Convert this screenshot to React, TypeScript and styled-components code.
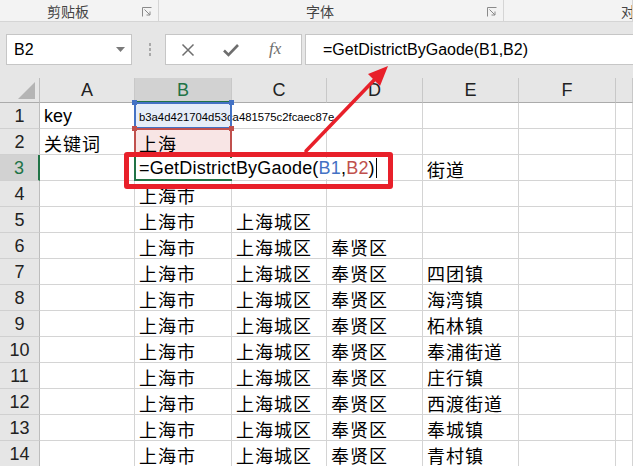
import React from "react";
import styled, { createGlobalStyle, css } from "styled-components";

const Global = createGlobalStyle`
  html, body { margin: 0; padding: 0; background: #ffffff; }
  body { font-family: "Liberation Sans", "Noto Sans CJK SC", sans-serif; }
`;

const Root = styled.div`
  position: relative;
  width: 633px;
  height: 466px;
  overflow: hidden;
  background: #ffffff;
`;

/* ---------- Ribbon ---------- */
const Ribbon = styled.div`
  display: flex;
  height: 21px;
  background: #f3f3f3;
  border-bottom: 1px solid #d5d5d5;
`;

const Group = styled.div<{ $w?: number; $pad: number }>`
  position: relative;
  display: flex;
  align-items: center;
  ${(p) => (p.$w ? `width: ${p.$w}px; flex: none;` : "flex: 1;")}
  padding-left: ${(p) => p.$pad}px;
  box-sizing: border-box;
  border-right: 1px solid #d5d5d5;
  font-family: "Noto Sans CJK SC", sans-serif;
  font-size: 14px;
  color: #444444;
  white-space: nowrap;
  overflow: hidden;
`;

const Launcher = styled.svg`
  position: absolute;
  right: 6px;
  top: 7px;
`;

const LauncherIcon = () => (
  <Launcher width="10" height="10" viewBox="0 0 10 10">
    <path d="M0.5 9.5 V0.5 H9.5" fill="none" stroke="#8a8a8a" strokeWidth="1" />
    <path d="M2.5 2.5 L8 8 M8 4.5 V8 H4.5" fill="none" stroke="#8a8a8a" strokeWidth="1" />
  </Launcher>
);

/* ---------- Formula bar ---------- */
const FormulaArea = styled.div`
  display: flex;
  align-items: flex-start;
  height: 56px;
  background: #e6e6e6;
  padding-top: 12px;
  box-sizing: border-box;
`;

const NameBox = styled.div`
  display: flex;
  align-items: center;
  justify-content: space-between;
  margin-left: 6px;
  width: 126px;
  height: 31px;
  box-sizing: border-box;
  background: #ffffff;
  border: 1px solid #c6c6c6;
  padding: 0 6px 0 7px;
  font-size: 16px;
  color: #000;
`;

const Dots = styled.div`
  display: flex;
  flex-direction: column;
  gap: 2px;
  margin: 9px 0 0 17px;
  width: 20px;
  span {
    width: 2px;
    height: 3px;
    background: #a9a9a9;
  }
`;

const FxBox = styled.div`
  display: flex;
  align-items: center;
  width: 137px;
  height: 31px;
  box-sizing: border-box;
  margin-left: -4px;
  background: #ffffff;
  border: 1px solid #c6c6c6;
  padding-left: 15px;
  gap: 28px;
`;

const FxText = styled.span`
  font-family: "Liberation Serif", serif;
  font-style: italic;
  font-size: 17px;
  color: #6e6e6e;
  margin: -2px 0 0 2px;
`;

const FormulaInput = styled.div`
  flex: 1;
  height: 31px;
  margin-left: 3px;
  box-sizing: border-box;
  background: #ffffff;
  border: 1px solid #c6c6c6;
  border-right: none;
  padding-left: 17px;
  display: flex;
  align-items: center;
  font-size: 16px;
  color: #000;
  white-space: nowrap;
`;

/* ---------- Sheet ---------- */
const Sheet = styled.div`
  position: relative;
  display: grid;
  grid-template-columns: 40px 95px 97px 95px 96px 96px 97px 1fr;
  grid-template-rows: 25px repeat(14, 26px);
`;

const Corner = styled.div`
  background: #e6e6e6;
  border-right: 1px solid #bdbdbd;
  border-bottom: 1px solid #ababab;
  box-sizing: border-box;
  display: flex;
  align-items: flex-end;
  justify-content: flex-end;
  padding: 0 4px 3px 0;
`;

const ColHead = styled.div<{ $sel?: boolean }>`
  background: ${(p) => (p.$sel ? "#d2d2d2" : "#e6e6e6")};
  color: ${(p) => (p.$sel ? "#217346" : "#222222")};
  border-right: 1px solid #c8c8c8;
  border-bottom: ${(p) => (p.$sel ? "2px solid #217346" : "1px solid #ababab")};
  box-sizing: border-box;
  display: flex;
  align-items: center;
  justify-content: center;
  font-size: 18px;
  padding-top: ${(p) => (p.$sel ? "2px" : "1px")};
`;

const RowHead = styled.div<{ $sel?: boolean }>`
  background: ${(p) => (p.$sel ? "#d2d2d2" : "#e6e6e6")};
  color: ${(p) => (p.$sel ? "#217346" : "#222222")};
  border-right: ${(p) => (p.$sel ? "2px solid #217346" : "1px solid #bdbdbd")};
  border-bottom: 1px solid #d0d0d0;
  box-sizing: border-box;
  display: flex;
  align-items: center;
  justify-content: center;
  font-size: 18px;
  padding-top: 1px;
`;

type RefKind = "blue" | "red" | "green";
const refColor: Record<RefKind, string> = {
  blue: "#4472c4",
  red: "#c0504d",
  green: "#217346",
};
const refFill: Record<RefKind, string> = {
  blue: "#e6edf8",
  red: "#f8e5e5",
  green: "#ffffff",
};

const Cell = styled.div<{
  $ref?: RefKind;
  $noRight?: boolean;
  $cjk?: boolean;
  $small?: boolean;
  $front?: boolean;
}>`
  position: relative;
  box-sizing: border-box;
  border-right: 1px solid ${(p) => (p.$noRight ? "transparent" : "#d4d4d4")};
  border-bottom: 1px solid #d4d4d4;
  background: ${(p) => (p.$ref ? refFill[p.$ref] : "transparent")};
  display: flex;
  align-items: center;
  padding: 2px 0 0 4px;
  white-space: nowrap;
  overflow: visible;
  font-size: ${(p) => (p.$small ? "11.3px" : "18px")};
  letter-spacing: ${(p) => (p.$cjk ? "1px" : "0")};
  color: #000;
  z-index: ${(p) => (p.$front ? 3 : 1)};
  ${(p) =>
    p.$ref &&
    css`
      &::after {
        content: "";
        position: absolute;
        top: -1px;
        left: -1px;
        right: -1px;
        bottom: -1px;
        border: 2px solid ${refColor[p.$ref]};
        pointer-events: none;
      }
    `}
`;

const Handle = styled.span<{ $c: RefKind; $side: "l" | "r" }>`
  position: absolute;
  top: -3px;
  ${(p) => (p.$side === "l" ? "left: -3px;" : "right: -3px;")}
  width: 5px;
  height: 5px;
  background: ${(p) => refColor[p.$c]};
  z-index: 2;
`;

const Editor = styled.span`
  position: relative;
  z-index: 4;
  background: #ffffff;
  padding-right: 14px;
  letter-spacing: 0.2px;
`;

const Ref = styled.span<{ $c: RefKind }>`
  color: ${(p) => refColor[p.$c]};
`;

const Caret = styled.span`
  display: inline-block;
  width: 1px;
  height: 20px;
  background: #000;
  vertical-align: -4px;
  margin-left: 1px;
`;

const RedBox = styled.div`
  position: absolute;
  left: 124px;
  top: 74px;
  width: 269px;
  height: 37px;
  box-sizing: border-box;
  border: 5px solid #e8202a;
  border-radius: 3px;
  z-index: 6;
  pointer-events: none;
`;

const Overlay = styled.svg`
  position: absolute;
  left: 0;
  top: 0;
  z-index: 10;
  pointer-events: none;
`;

type Row = { a?: string; b?: string; c?: string; d?: string; e?: string };

const rows: Row[] = [
  { b: "上海市" },
  { b: "上海市", c: "上海城区" },
  { b: "上海市", c: "上海城区", d: "奉贤区" },
  { b: "上海市", c: "上海城区", d: "奉贤区", e: "四团镇" },
  { b: "上海市", c: "上海城区", d: "奉贤区", e: "海湾镇" },
  { b: "上海市", c: "上海城区", d: "奉贤区", e: "柘林镇" },
  { b: "上海市", c: "上海城区", d: "奉贤区", e: "奉浦街道" },
  { b: "上海市", c: "上海城区", d: "奉贤区", e: "庄行镇" },
  { b: "上海市", c: "上海城区", d: "奉贤区", e: "西渡街道" },
  { b: "上海市", c: "上海城区", d: "奉贤区", e: "奉城镇" },
  { b: "上海市", c: "上海城区", d: "奉贤区", e: "青村镇" },
];

const cols = ["A", "B", "C", "D", "E", "F", ""];

export default function App() {
  return (
    <Root>
      <Global />
      <Ribbon>
        <Group $w={159} $pad={47}>
          剪贴板
          <LauncherIcon />
        </Group>
        <Group $w={345} $pad={147}>
          字体
          <LauncherIcon />
        </Group>
        <Group $pad={117}>对齐方式</Group>
      </Ribbon>

      <FormulaArea>
        <NameBox>
          <span>B2</span>
          <svg width="9" height="5" viewBox="0 0 9 5">
            <path d="M0 0 H9 L4.5 5 Z" fill="#7a7a7a" />
          </svg>
        </NameBox>
        <Dots>
          <span />
          <span />
          <span />
        </Dots>
        <FxBox>
          <svg width="14" height="14" viewBox="0 0 14 14">
            <path d="M1.5 1.5 L12.5 12.5 M12.5 1.5 L1.5 12.5" stroke="#6e6e6e" strokeWidth="1.5" fill="none" />
          </svg>
          <svg width="16" height="14" viewBox="0 0 16 14">
            <path d="M1 7.5 L5.5 12 L15 2" stroke="#6e6e6e" strokeWidth="2.6" fill="none" />
          </svg>
          <FxText>fx</FxText>
        </FxBox>
        <FormulaInput>=GetDistrictByGaode(B1,B2)</FormulaInput>
      </FormulaArea>

      <Sheet>
        <Corner>
          <svg width="17" height="17" viewBox="0 0 17 17">
            <path d="M17 0 V17 H0 Z" fill="#b4b4b4" />
          </svg>
        </Corner>
        {cols.map((c, i) => (
          <ColHead key={i} $sel={c === "B"}>
            {c}
          </ColHead>
        ))}

        {/* Row 1 */}
        <RowHead>1</RowHead>
        <Cell>key</Cell>
        <Cell $ref="blue" $small $front>
          b3a4d421704d53ca481575c2fcaec87e
          <Handle $c="blue" $side="l" />
          <Handle $c="blue" $side="r" />
        </Cell>
        <Cell $noRight />
        <Cell />
        <Cell />
        <Cell />
        <Cell />

        {/* Row 2 */}
        <RowHead>2</RowHead>
        <Cell $cjk>关键词</Cell>
        <Cell $ref="red" $cjk $front>
          上海
          <Handle $c="red" $side="l" />
          <Handle $c="red" $side="r" />
        </Cell>
        <Cell />
        <Cell />
        <Cell />
        <Cell />
        <Cell />

        {/* Row 3 */}
        <RowHead $sel>3</RowHead>
        <Cell />
        <Cell $ref="green" $front>
          <Editor>
            =GetDistrictByGaode(<Ref $c="blue">B1</Ref>,<Ref $c="red">B2</Ref>)
            <Caret />
          </Editor>
        </Cell>
        <Cell />
        <Cell />
        <Cell $cjk>街道</Cell>
        <Cell />
        <Cell />

        {rows.map((r, i) => (
          <React.Fragment key={i}>
            <RowHead>{i + 4}</RowHead>
            <Cell $cjk>{r.a}</Cell>
            <Cell $cjk>{r.b}</Cell>
            <Cell $cjk>{r.c}</Cell>
            <Cell $cjk>{r.d}</Cell>
            <Cell $cjk>{r.e}</Cell>
            <Cell />
            <Cell />
          </React.Fragment>
        ))}

        <RedBox />
      </Sheet>

      <Overlay width="633" height="466" viewBox="0 0 633 466">
        <line x1="306" y1="151" x2="378" y2="76" stroke="#e8202a" strokeWidth="3.5" strokeLinecap="round" />
        <path d="M388 66 L368 74 L380 86 Z" fill="#e8202a" />
      </Overlay>
    </Root>
  );
}
